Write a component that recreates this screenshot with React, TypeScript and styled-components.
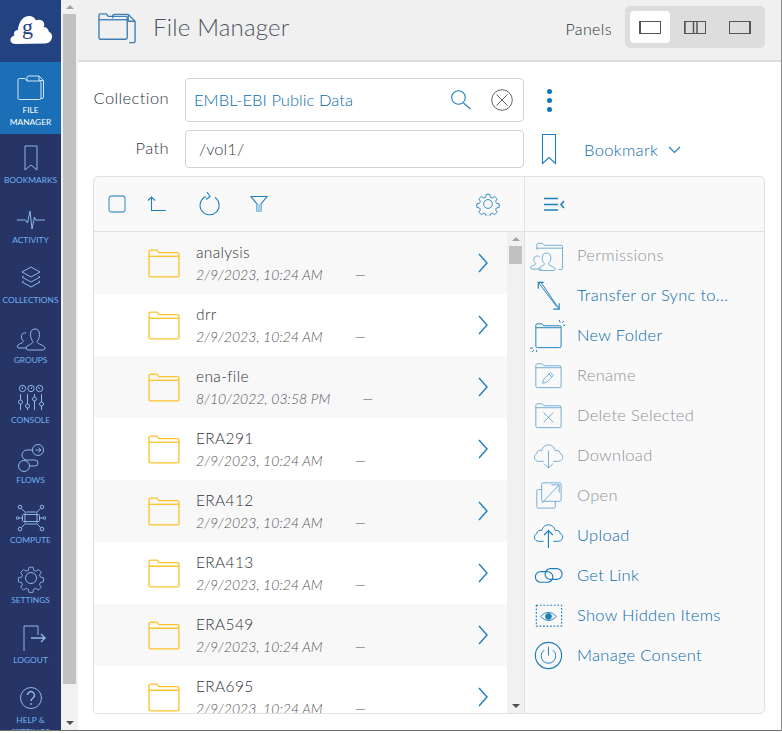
import React from 'react'
import styled, { createGlobalStyle } from 'styled-components'

const GlobalStyle = createGlobalStyle`
    html, body {
        margin: 0;
        padding: 0;
        background: #fff;
        overflow: hidden;
    }

    body {
        font-family: Lato, 'Open Sans', sans-serif;
    }
`

const BLUE = '#0a6cab'
const ICON_BLUE = '#1f7fba'

const Frame = styled.div`
    box-sizing: border-box;
    width: 782px;
    height: 731px;
    display: flex;
    overflow: hidden;
    border-right: 1px solid #8a8a8a;
    border-bottom: 1px solid #6f6f6f;
`

const Nav = styled.nav`
    width: 61px;
    flex: none;
    background: #273566;
    display: flex;
    flex-direction: column;
`

const LogoBox = styled.div`
    height: 62px;
    flex: none;
    background: #224280;
    display: flex;
    align-items: center;
    justify-content: center;
`

const NavItem = styled.a<{ $active?: boolean; $tall?: boolean }>`
    height: ${(p) => (p.$tall ? 72 : 60)}px;
    flex: none;
    box-sizing: border-box;
    padding-top: ${(p) => (p.$tall ? 11 : 9)}px;
    background: ${(p) => (p.$active ? '#1b6fb6' : 'transparent')};
    color: ${(p) => (p.$active ? '#fff' : '#6fb0f2')};
    display: flex;
    flex-direction: column;
    align-items: center;
    font-size: 8.4px;
    line-height: 12px;
    text-align: center;
    text-transform: uppercase;
`

const NavIcon = styled.svg`
    width: 30px;
    height: 30px;
    flex: none;
    margin-bottom: 1px;
    fill: none;
    stroke: currentColor;
    stroke-width: 1;
`

const NavIconWrap = styled.span<{ $active?: boolean }>`
    display: flex;
    color: ${(p) => (p.$active ? '#d5e6f7' : '#8db7e6')};
`

const Scrollbar = styled.div`
    width: 17px;
    flex: none;
    background: #f1f1f1;
    display: flex;
    flex-direction: column;
    align-items: center;
`

const ScrollArrow = styled.div<{ $down?: boolean }>`
    height: 14px;
    flex: none;
    display: flex;
    align-items: center;
    justify-content: center;

    &::before {
        content: '';
        border-left: 4px solid transparent;
        border-right: 4px solid transparent;
        ${(p) =>
            p.$down ? 'border-top: 4px solid #505050;' : 'border-bottom: 4px solid #a3a3a3;'}
    }
`

const ScrollTrack = styled.div`
    flex: 1;
    width: 100%;
    display: flex;
    justify-content: center;
`

const ScrollThumb = styled.div<{ $height: number }>`
    width: 13px;
    height: ${(p) => p.$height}px;
    background: #c1c1c1;
`

const Main = styled.main`
    flex: 1;
    min-width: 0;
    display: flex;
    flex-direction: column;
`

const Header = styled.header`
    height: 62px;
    flex: none;
    box-sizing: border-box;
    background: #f0f0f0;
    border-bottom: 2px solid #dcdcdc;
    padding: 0 16px 0 20px;
    display: flex;
    align-items: center;
`

const TitleIcon = styled.svg`
    width: 39px;
    height: 36px;
    flex: none;
    margin-right: 16px;
    margin-top: -2px;
    fill: none;
    stroke: #3f7fb5;
    stroke-width: 1.4;
`

const Title = styled.h1`
    margin: -7px 0 0;
    font-size: 24px;
    font-weight: 300;
    letter-spacing: 0.2px;
    color: #4f5660;
    flex: 1;
`

const PanelsLabel = styled.span`
    font-size: 16px;
    font-weight: 300;
    color: #2f343b;
    margin: -3px 13px 0 0;
    letter-spacing: 0.4px;
`

const PanelGroup = styled.div`
    width: 140px;
    height: 42px;
    margin-top: -6px;
    box-sizing: border-box;
    padding: 5px;
    background: #dddddd;
    border-radius: 5px;
    display: flex;
    justify-content: space-between;
`

const PanelButton = styled.button<{ $active?: boolean }>`
    width: 40px;
    height: 32px;
    padding: 0;
    border: 0;
    border-radius: 4px;
    background: ${(p) => (p.$active ? '#fff' : 'transparent')};
    display: flex;
    align-items: center;
    justify-content: center;
`

const PanelGlyph = styled.svg`
    width: 24px;
    height: 16px;
    fill: none;
    stroke: #555;
    stroke-width: 1;
`

const Body = styled.div`
    flex: 1;
    min-height: 0;
    padding: 16px 16px 16px 15px;
    display: flex;
    flex-direction: column;
`

const FieldRow = styled.div<{ $height: number }>`
    height: ${(p) => p.$height}px;
    display: flex;
    align-items: center;
    margin-bottom: 8px;
`

const FieldLabel = styled.label<{ $raise: number }>`
    width: 76px;
    margin: ${(p) => -p.$raise}px 16px 0 0;
    flex: none;
    text-align: right;
    font-size: 16.5px;
    font-weight: 300;
    letter-spacing: 0.4px;
    color: #2f343b;
`

const FieldBox = styled.div`
    width: 339px;
    height: 100%;
    flex: none;
    box-sizing: border-box;
    border: 1px solid #ced3d9;
    border-radius: 4px;
    padding: 0 8px;
    display: flex;
    align-items: center;
    font-size: 16.5px;
    font-weight: 300;
    letter-spacing: 0.05px;
`

const FieldValue = styled.span<{ $link?: boolean }>`
    flex: 1;
    margin-top: -1px;
    padding-left: ${(p) => (p.$link ? 0 : 5)}px;
    color: ${(p) => (p.$link ? BLUE : '#3c4149')};
`

const IconSvg = styled.svg<{ $w: number; $h: number }>`
    width: ${(p) => p.$w}px;
    height: ${(p) => p.$h}px;
    flex: none;
    fill: none;
    stroke: ${ICON_BLUE};
    stroke-width: 1.1;
`

const IconButton = styled.span<{ $gap: number }>`
    display: flex;
    margin-right: ${(p) => p.$gap}px;
`

const Kebab = styled.div`
    margin-left: 23px;
    width: 6px;
    display: flex;
    flex-direction: column;
    gap: 4px;
`

const KebabDot = styled.span`
    width: 5px;
    height: 5px;
    border-radius: 50%;
    background: #0f75b5;
`

const BookmarkLink = styled.span`
    margin-left: 27px;
    margin-top: 2px;
    display: flex;
    align-items: center;
    gap: 10px;
    font-size: 16.5px;
    font-weight: 300;
    letter-spacing: 0.35px;
    color: ${BLUE};
`

const Browser = styled.section`
    flex: 1;
    min-height: 0;
    box-sizing: border-box;
    border: 1px solid #dfe1e5;
    border-radius: 5px;
    background: #f9f9fa;
    display: flex;
    overflow: hidden;
`

const ListPane = styled.div`
    width: 431px;
    flex: none;
    box-sizing: border-box;
    border-right: 1px solid #dfe1e5;
    display: flex;
    flex-direction: column;
`

const Toolbar = styled.div`
    height: 55px;
    flex: none;
    box-sizing: border-box;
    border-bottom: 1px solid #dfe1e5;
    display: flex;
    align-items: center;
    padding: 0 24px 0 14px;
`

const ToolbarSpacer = styled.span`
    flex: 1;
`

const ListWrap = styled.div`
    flex: 1;
    min-height: 0;
    display: flex;
`

const Rows = styled.div`
    flex: 1;
    overflow: hidden;
`

const Row = styled.div<{ $odd: boolean }>`
    height: 62px;
    box-sizing: border-box;
    background: ${(p) => (p.$odd ? '#f8f8f8' : '#fff')};
    padding: 9px 18px 0 54px;
    display: flex;
`

const RowFolder = styled.svg`
    width: 32px;
    height: 32px;
    flex: none;
    margin: 6px 16px 0 0;
    fill: none;
    stroke: #fcc42a;
    stroke-width: 1.3;
`

const RowText = styled.div`
    flex: 1;
    min-width: 0;
`

const RowName = styled.div`
    font-size: 15.5px;
    font-weight: 300;
    line-height: 22px;
    letter-spacing: 0.35px;
    color: #2f343b;
`

const RowMeta = styled.div`
    display: flex;
    gap: 32px;
    margin-top: 1px;
    font-size: 14px;
    font-weight: 300;
    line-height: 22px;
    font-style: italic;
    letter-spacing: 0.05px;
    color: #4f535a;
`

const RowDash = styled.span`
    font-style: normal;
`

const RowChevron = styled.svg`
    width: 12px;
    height: 20px;
    flex: none;
    margin-top: 12px;
    fill: none;
    stroke: ${ICON_BLUE};
    stroke-width: 1.4;
`

const ActionPane = styled.div`
    flex: 1;
    min-width: 0;
    display: flex;
    flex-direction: column;
`

const ActionHead = styled.div`
    height: 55px;
    flex: none;
    box-sizing: border-box;
    border-bottom: 1px solid #dfe1e5;
    padding-left: 18px;
    display: flex;
    align-items: center;
`

const ActionList = styled.ul`
    margin: 3px 0 0;
    padding: 0;
    list-style: none;
`

const ActionItem = styled.li<{ $disabled?: boolean }>`
    height: 40px;
    box-sizing: border-box;
    padding-left: 4px;
    display: flex;
    align-items: center;
    gap: 11px;
    color: ${(p) => (p.$disabled ? '#8f9399' : BLUE)};
    font-size: 16.5px;
    font-weight: 300;
    letter-spacing: 0.3px;

    svg {
        opacity: ${(p) => (p.$disabled ? 0.62 : 1)};
    }
`

const ActionIcon = styled.svg`
    width: 37px;
    height: 34px;
    flex: none;
    fill: none;
    stroke: ${ICON_BLUE};
    stroke-width: 1;
`

const navItems: { label: React.ReactNode; icon: React.ReactNode; active?: boolean }[] = [
    {
        label: (
            <>
                File
                <br />
                Manager
            </>
        ),
        active: true,
        icon: (
            <>
                <path d="M2 8.500V25a1.500 1.500 0 0 0 1.500 1.500h20a1.500 1.500 0 0 0 1.500-1.500V9.500a1.500 1.500 0 0 0-1.500-1.500H11l-2-2.500H3.500A1.500 1.500 0 0 0 2 7z" />
                <path d="M11 8V4.500A1.500 1.500 0 0 1 12.500 3H23l4.500 4.500V24a1.500 1.500 0 0 1-1.500 1.500H25" />
                <path d="M23 3v4.500h4.500" />
            </>
        ),
    },
    {
        label: 'Bookmarks',
        icon: <path d="M9 3h12v24l-6-5-6 5z" />,
    },
    {
        label: 'Activity',
        icon: <path d="M1 17h8.500l2 3 2.500-12 2 18 2.500-12 1 3H29" />,
    },
    {
        label: 'Collections',
        icon: (
            <>
                <path d="M15 4l9 5-9 5-9-5z" />
                <path d="M7.500 13L6 14l9 5 9-5-1.500-1" />
                <path d="M7.500 18L6 19l9 5 9-5-1.500-1" />
            </>
        ),
    },
    {
        label: 'Groups',
        icon: (
            <>
                <path d="M11 25H3c-2 0-2-2-1-3 1.500-1.500 5-2 5.500-3.500C6 17 5 14.500 5.500 12.500 6 10.500 8 9.500 10 10" />
                <path d="M10 25c0-3 7-3.500 7-6.500-1.500-1.500-2.500-4-2.500-7C14.500 8 16 6 19 6s4.500 2 4.500 5.500c0 3-1 5.500-2.500 7 0 3 8 3.500 8 6.500 0 2-2 2-3 2H13c-2 0-3-.500-3-2z" />
            </>
        ),
    },
    {
        label: 'Console',
        icon: (
            <>
                <circle cx="6.500" cy="5.500" r="3.200" />
                <circle cx="15" cy="5.500" r="3.200" />
                <circle cx="23.500" cy="5.500" r="3.200" />
                <path d="M6.500 4v2M15 6l1-2M23.500 6l-1-2" />
                <path d="M4.500 11v6M4.500 21v6M11.500 11v10M11.500 25v2M18.500 11v3M18.500 18v9M25.500 11v8M25.500 23v4" />
                <circle cx="4.500" cy="19" r="2" />
                <circle cx="11.500" cy="23" r="2" />
                <circle cx="18.500" cy="16" r="2" />
                <circle cx="25.500" cy="21" r="2" />
            </>
        ),
    },
    {
        label: 'Flows',
        icon: (
            <>
                <circle cx="22" cy="7" r="5.500" />
                <circle cx="8" cy="23" r="5.500" />
                <path d="M16.500 7H11a5 5 0 0 0 0 10h8a3 3 0 0 1 0 6h-5.500" />
                <path d="M19.500 7h5M22.500 4.500L25 7l-2.500 2.500" />
            </>
        ),
    },
    {
        label: 'Compute',
        icon: (
            <>
                <rect x="9" y="9" width="12" height="12" rx="1.500" />
                <rect x="6.500" y="11.500" width="17" height="7" rx="1" />
                <circle cx="4" cy="4" r="1.800" />
                <circle cx="26" cy="4" r="1.800" />
                <circle cx="4" cy="26" r="1.800" />
                <circle cx="26" cy="26" r="1.800" />
                <circle cx="1.500" cy="15" r="1.300" />
                <circle cx="28.500" cy="15" r="1.300" />
                <path d="M5.500 5.500L9 9M24.500 5.500L21 9M5.500 24.500L9 21M24.500 24.500L21 21M3 15h3.500M23.500 15H27" />
            </>
        ),
    },
    {
        label: 'Settings',
        icon: (
            <>
                <circle cx="15" cy="15" r="5.500" />
                <path
                    d="M12.800 3h4.400l.8 3.500 2.300 1 3-1.900 3.100 3.100-1.900 3 1 2.300 3.500.8v4.400l-3.500.8-1 2.300 1.900 3-3.100 3.100-3-1.900-2.300 1-.8 3.500h-4.400l-.8-3.500-2.300-1-3 1.900-3.100-3.100 1.900-3-1-2.300-3.500-.8v-4.400l3.500-.8 1-2.300-1.900-3 3.100-3.100 3 1.900 2.300-1z"
                    transform="translate(1.500 1.500) scale(.9)"
                />
            </>
        ),
    },
    {
        label: 'Logout',
        icon: (
            <>
                <path d="M8 28V3h14v9" />
                <path d="M15 15h14M25 11l4 4-4 4" strokeWidth="1.400" />
            </>
        ),
    },
    {
        label: (
            <>
                Help &amp;
                <br />
                Settings
            </>
        ),
        icon: (
            <>
                <circle cx="15" cy="15" r="10.500" />
                <path d="M11.500 12a3.500 3.500 0 1 1 5.500 3c-1.500 1-2 1.500-2 3" strokeWidth="1.500" />
                <circle cx="15" cy="21" r=".6" />
            </>
        ),
    },
]

const Folder = () => (
    <>
        <path d="M1 7V4a1.500 1.500 0 0 1 1.500-1.500h6L10.500 5h18A1.500 1.500 0 0 1 30 6.500V27a1.500 1.500 0 0 1-1.500 1.500h-26A1.500 1.500 0 0 1 1 27z" />
        <path d="M1 8.500h29" />
    </>
)

// same outline for the three folder actions, the glyph inside differs
const ActionFolder = () => (
    <>
        <path d="M7 29V7.500A1.500 1.500 0 0 1 8.500 6h5l1.500 2h16.500A1.500 1.500 0 0 1 33 9.500V29a1.500 1.500 0 0 1-1.500 1.500h-23A1.500 1.500 0 0 1 7 29z" />
        <path d="M7 10h26" />
    </>
)

const Cloud = () => (
    <path d="M15 24H10c-5 0-6-6-2-8 0-3 3-4 5-3 1-4 4-6 7-6s6 2 7 6c3-1 5 1 5 3 3 1 3 4 2 6-1 1-2 2-4 2h-5" />
)

const actions: { label: string; disabled?: boolean; icon: React.ReactNode }[] = [
    {
        label: 'Permissions',
        disabled: true,
        icon: (
            <>
                <path d="M8 12V7a1.500 1.500 0 0 1 1.500-1.500h4l2 2H33A1.500 1.500 0 0 1 34.500 9v22a1.500 1.500 0 0 1-1.500 1.500h-2.500" />
                <path d="M8 10.500h26.500" />
                <path d="M13 32H3c-1.500 0-2-1.500-1-2.500 1.500-1.500 4.500-1.500 5-3-1.500-1.500-2-3-2-4.500 0-2 1-3.500 3.500-3.500 1 0 2 .5 2.500 1" />
                <path d="M10 32c-1-2 5.500-3 6-5.500-1.500-1.500-2.500-3.500-2.500-6 0-3 1.500-5 4.500-5s4.500 2 4.500 5c0 2.500-1 4.500-2.500 6 .5 2.500 8 3.500 7 6-.5 1-1 1-2 1H12c-1 0-1.500 0-2-.5z" />
            </>
        ),
    },
    {
        label: 'Transfer or Sync to...',
        icon: (
            <>
                <path d="M9.500 4.500L28.500 29.500M12 4L31 32" />
                <path d="M9.500 11V4.500H15M25 32h6v-6" strokeWidth="1.200" />
            </>
        ),
    },
    {
        label: 'New Folder',
        icon: (
            <>
                <ActionFolder />
                <path d="M31 2l1 2.500M36 3l-2 2M37 7.500h-2" />
                <path d="M1 31h3M3 35l2-2M8 35.500L7.500 33" />
            </>
        ),
    },
    {
        label: 'Rename',
        disabled: true,
        icon: (
            <>
                <ActionFolder />
                <path d="M14 26l1-4 7-7 3 3-7 7zM20.500 16.500l3 3" />
            </>
        ),
    },
    {
        label: 'Delete Selected',
        disabled: true,
        icon: (
            <>
                <ActionFolder />
                <path d="M15 15l10 10M25 15L15 25" />
            </>
        ),
    },
    {
        label: 'Download',
        disabled: true,
        icon: (
            <>
                <Cloud />
                <path d="M20 13v18M15.500 26.500L20 31l4.500-4.500" />
            </>
        ),
    },
    {
        label: 'Open',
        disabled: true,
        icon: (
            <>
                <rect x="13" y="5" width="20" height="19" rx="1.500" />
                <path d="M13 12H9.500A1.500 1.500 0 0 0 8 13.500v16A1.500 1.500 0 0 0 9.500 31h16a1.500 1.500 0 0 0 1.500-1.500V24" />
                <path d="M13 26L31 7M23 7h8v8" />
            </>
        ),
    },
    {
        label: 'Upload',
        icon: (
            <>
                <Cloud />
                <path d="M20 31V13M15.500 17.500L20 13l4.500 4.500" strokeWidth="1.200" />
            </>
        ),
    },
    {
        label: 'Get Link',
        icon: (
            <>
                <rect x="6.500" y="14" width="18" height="11" rx="5.500" strokeWidth="1.200" />
                <rect x="16.500" y="11" width="17.500" height="11" rx="5.500" strokeWidth="1.200" />
            </>
        ),
    },
    {
        label: 'Show Hidden Items',
        icon: (
            <>
                <rect x="7.500" y="7.500" width="26" height="21.500" strokeDasharray="1.800 1.800" strokeWidth="1.200" />
                <path d="M12 19c4.500-5.500 11.500-5.500 16 0-4.500 5.500-11.500 5.500-16 0z" />
                <circle cx="20" cy="19" r="3" fill={ICON_BLUE} />
            </>
        ),
    },
    {
        label: 'Manage Consent',
        icon: (
            <>
                <circle cx="20" cy="18" r="13.500" strokeWidth="1.200" />
                <path d="M15.500 12.500a7.500 7.500 0 1 0 9 0M20 9v9" />
            </>
        ),
    },
]

const rows = [
    { name: 'analysis', date: '2/9/2023, 10:24 AM' },
    { name: 'drr', date: '2/9/2023, 10:24 AM' },
    { name: 'ena-file', date: '8/10/2022, 03:58 PM' },
    { name: 'ERA291', date: '2/9/2023, 10:24 AM' },
    { name: 'ERA412', date: '2/9/2023, 10:24 AM' },
    { name: 'ERA413', date: '2/9/2023, 10:24 AM' },
    { name: 'ERA549', date: '2/9/2023, 10:24 AM' },
    { name: 'ERA695', date: '2/9/2023, 10:24 AM' },
]

const App: React.FunctionComponent = () => (
    <>
        <GlobalStyle />
        <Frame>
            <Nav>
                <LogoBox>
                    <svg width="42" height="32" viewBox="0 0 42 32">
                        <path
                            d="M6 30c-4 0-6-2-5.500-5 .5-2 2-3 4-3.500C3 19 5 16 8 16c0-1 0-3 1-5 1.500-5 5-9 10-9 3.500 0 6 2 7 4.500 2-1.500 6-1 7.500 1.500 1 2 1 4 0 5 3 0 5 2 5.500 5 2.500 1 3.500 3 3 5.500-.5 3-3 6-7 6z"
                            fill="#fff"
                            transform="translate(0 -1)"
                        />
                        <text x="12" y="19" fontFamily="'Liberation Serif', serif" fontSize="22" fill="#224280">
                            g
                        </text>
                    </svg>
                </LogoBox>
                {navItems.map((item, i) => (
                    <NavItem key={i} $active={item.active} $tall={item.active}>
                        <NavIconWrap $active={item.active}>
                            <NavIcon viewBox="0 0 30 30">{item.icon}</NavIcon>
                        </NavIconWrap>
                        <span>{item.label}</span>
                    </NavItem>
                ))}
            </Nav>
            <Scrollbar>
                <ScrollArrow />
                <ScrollTrack>
                    <ScrollThumb $height={670} />
                </ScrollTrack>
                <ScrollArrow $down />
            </Scrollbar>
            <Main>
                <Header>
                    <TitleIcon viewBox="0 0 40 36">
                        <Folder />
                        <path d="M13 5V3a2 2 0 0 1 2-2h14l7 7v20a2 2 0 0 1-2 2h-4" transform="translate(2 2)" />
                        <path d="M31 3v7h7" />
                    </TitleIcon>
                    <Title>File Manager</Title>
                    <PanelsLabel>Panels</PanelsLabel>
                    <PanelGroup>
                        <PanelButton $active>
                            <PanelGlyph viewBox="0 0 24 16">
                                <rect x="1.500" y="2.500" width="21" height="12" />
                                <path d="M2 3v11" strokeWidth="2" />
                            </PanelGlyph>
                        </PanelButton>
                        <PanelButton>
                            <PanelGlyph viewBox="0 0 24 16">
                                <rect x="1.500" y="2.500" width="21" height="12" />
                                <path d="M2 3v11M10.500 2.500v12M14 2.500v12" strokeWidth="1.500" />
                            </PanelGlyph>
                        </PanelButton>
                        <PanelButton>
                            <PanelGlyph viewBox="0 0 24 16">
                                <rect x="1.500" y="2.500" width="21" height="12" />
                                <path d="M22 3v11" strokeWidth="2" />
                            </PanelGlyph>
                        </PanelButton>
                    </PanelGroup>
                </Header>
                <Body>
                    <FieldRow $height={44}>
                        <FieldLabel $raise={5}>Collection</FieldLabel>
                        <FieldBox>
                            <FieldValue $link>EMBL-EBI Public Data</FieldValue>
                            <IconButton $gap={19}>
                                <IconSvg $w={22} $h={22} viewBox="0 0 22 22">
                                    <circle cx="8.500" cy="8.500" r="6.800" />
                                    <path d="M13.500 14l7 6" />
                                </IconSvg>
                            </IconButton>
                            <IconButton $gap={2}>
                                <svg width="22" height="22" viewBox="0 0 22 22" fill="none" stroke="#666" strokeWidth="1">
                                    <circle cx="11" cy="11" r="10.300" />
                                    <path d="M5.500 5.500l11 11M16.500 5.500l-11 11" />
                                </svg>
                            </IconButton>
                        </FieldBox>
                        <Kebab>
                            <KebabDot />
                            <KebabDot />
                            <KebabDot />
                        </Kebab>
                    </FieldRow>
                    <FieldRow $height={38}>
                        <FieldLabel $raise={3}>Path</FieldLabel>
                        <FieldBox>
                            <FieldValue>/vol1/</FieldValue>
                        </FieldBox>
                        <IconSvg $w={16} $h={32} viewBox="0 0 16 32" style={{ marginLeft: 17 }}>
                            <path d="M1.500 1.500h13v29l-6.500-6-6.500 6z" />
                        </IconSvg>
                        <BookmarkLink>
                            Bookmark
                            <IconSvg $w={13} $h={8} viewBox="0 0 13 8">
                                <path d="M1 1l5.500 5.500L12 1" />
                            </IconSvg>
                        </BookmarkLink>
                    </FieldRow>
                    <Browser>
                        <ListPane>
                            <Toolbar>
                                <svg width="18" height="18" viewBox="0 0 18 18" fill="none" stroke="#5aa3cf" strokeWidth="1.300">
                                    <rect x="1" y="1" width="16" height="16" rx="2.500" />
                                </svg>
                                <IconSvg $w={20} $h={18} viewBox="0 0 20 18" style={{ marginLeft: 21 }}>
                                    <path d="M4.500 16V2M1 5.500L4.500 2 8 5.500M4.500 15.500H19" />
                                </IconSvg>
                                <IconSvg $w={22} $h={26} viewBox="0 0 22 26" style={{ marginLeft: 31 }}>
                                    <path d="M8 5.500a9.500 9.500 0 1 0 9 1" />
                                    <path d="M9 1l3 4.500-4 3" />
                                </IconSvg>
                                <IconSvg $w={18} $h={18} viewBox="0 0 18 18" style={{ marginLeft: 30 }}>
                                    <path d="M1 1.500h16L11 9v7H7V9z" />
                                    <path d="M7 9h4v7H7z" fill="#a9d0e8" stroke="none" />
                                </IconSvg>
                                <ToolbarSpacer />
                                <IconSvg $w={24} $h={24} viewBox="0 0 30 30">
                                    <circle cx="15" cy="15" r="5.500" />
                                    <path d="M12.800 3h4.400l.8 3.500 2.300 1 3-1.900 3.100 3.100-1.900 3 1 2.300 3.500.8v4.400l-3.500.8-1 2.300 1.900 3-3.100 3.100-3-1.900-2.300 1-.8 3.500h-4.400l-.8-3.500-2.300-1-3 1.900-3.100-3.100 1.900-3-1-2.300-3.500-.8v-4.400l3.500-.8 1-2.300-1.900-3 3.100-3.100 3 1.900 2.300-1z" />
                                </IconSvg>
                            </Toolbar>
                            <ListWrap>
                                <Rows>
                                    {rows.map((row, i) => (
                                        <Row key={row.name} $odd={i % 2 === 0}>
                                            <RowFolder viewBox="0 0 31 30">
                                                <Folder />
                                            </RowFolder>
                                            <RowText>
                                                <RowName>{row.name}</RowName>
                                                <RowMeta>
                                                    <span>{row.date}</span>
                                                    <RowDash>—</RowDash>
                                                </RowMeta>
                                            </RowText>
                                            <RowChevron viewBox="0 0 12 20">
                                                <path d="M2 1l8 9-8 9" />
                                            </RowChevron>
                                        </Row>
                                    ))}
                                </Rows>
                                <Scrollbar>
                                    <ScrollArrow />
                                    <ScrollTrack>
                                        <ScrollThumb $height={18} />
                                    </ScrollTrack>
                                    <ScrollArrow $down />
                                </Scrollbar>
                            </ListWrap>
                        </ListPane>
                        <ActionPane>
                            <ActionHead>
                                <IconSvg $w={24} $h={16} viewBox="0 0 24 16">
                                    <path d="M1 2.500h14M1 8.500h14M1 14h14" strokeWidth="1.600" />
                                    <path d="M21 5l-3 3.500 3 3.500" strokeWidth="1.600" />
                                </IconSvg>
                            </ActionHead>
                            <ActionList>
                                {actions.map((action) => (
                                    <ActionItem key={action.label} $disabled={action.disabled}>
                                        <ActionIcon viewBox="0 0 38 35">{action.icon}</ActionIcon>
                                        {action.label}
                                    </ActionItem>
                                ))}
                            </ActionList>
                        </ActionPane>
                    </Browser>
                </Body>
            </Main>
        </Frame>
    </>
)

export default App
